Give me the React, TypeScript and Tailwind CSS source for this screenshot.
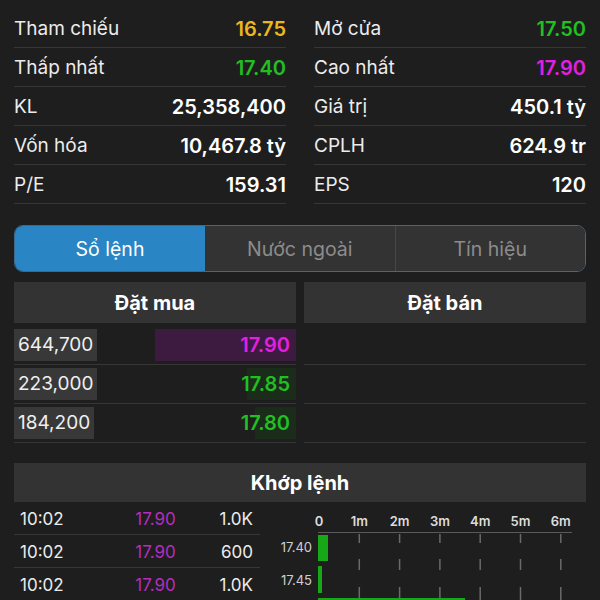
import React from "react";

const stats = [
  [
    { label: "Tham chiếu", value: "16.75", color: "text-[#eab71d]" },
    { label: "Thấp nhất", value: "17.40", color: "text-[#22bf22]" },
    { label: "KL", value: "25,358,400", color: "text-white" },
    { label: "Vốn hóa", value: "10,467.8 tỷ", color: "text-white" },
    { label: "P/E", value: "159.31", color: "text-white" },
  ],
  [
    { label: "Mở cửa", value: "17.50", color: "text-[#22bf22]" },
    { label: "Cao nhất", value: "17.90", color: "text-[#e21fe2]" },
    { label: "Giá trị", value: "450.1 tỷ", color: "text-white" },
    { label: "CPLH", value: "624.9 tr", color: "text-white" },
    { label: "EPS", value: "120", color: "text-white" },
  ],
];

const bids = [
  { vol: "644,700", price: "17.90", bar: 141, purple: true },
  { vol: "223,000", price: "17.85", bar: 49, purple: false },
  { vol: "184,200", price: "17.80", bar: 41, purple: false },
];

const trades = [
  { time: "10:02", price: "17.90", vol: "1.0K" },
  { time: "10:02", price: "17.90", vol: "600" },
  { time: "10:02", price: "17.90", vol: "1.0K" },
];

function Chart() {
  const xs = [0, 1, 2, 3, 4, 5, 6].map((i) => 59 + i * 40.3);
  const labels = ["0", "1m", "2m", "3m", "4m", "5m", "6m"];
  return (
    <svg width="326" height="98" viewBox="0 0 326 98" className="block">
      {labels.map((l, i) => (
        <text
          key={l}
          x={xs[i]}
          y="24"
          textAnchor="middle"
          fontSize="13"
          fontWeight="600"
          fill="#dcdcdc"
        >
          {l}
        </text>
      ))}
      <line x1="58" y1="30.5" x2="312" y2="30.5" stroke="#5a5a5a" strokeWidth="1" />
      {xs.slice(1).map((x) => (
        <g key={x} stroke="#6a6a6a" strokeWidth="1.5">
          <line x1={x} y1="32" x2={x} y2="41" />
          <line x1={x} y1="57" x2={x} y2="68" />
          <line x1={x} y1="85" x2={x} y2="98" />
        </g>
      ))}
      <text x="52" y="50" textAnchor="end" fontSize="13" fill="#cfcfcf">
        17.40
      </text>
      <text x="52" y="83" textAnchor="end" fontSize="13" fill="#cfcfcf">
        17.45
      </text>
      <rect x="58" y="33" width="10" height="26" fill="#16a816" />
      <rect x="58" y="64" width="4" height="27" fill="#16a816" />
      <rect x="58" y="96" width="147" height="4" fill="#16a816" />
    </svg>
  );
}

export default function App() {
  return (
    <div
      className="w-[600px] h-[600px] overflow-hidden bg-[#1e1e1e] px-[14px] pt-[9px] text-white"
      style={{ fontFamily: "Inter, 'Noto Sans', sans-serif" }}
    >
      <div className="grid grid-cols-2 gap-x-[28px]">
        {stats.map((col, ci) => (
          <div key={ci}>
            {col.map((s) => (
              <div
                key={s.label}
                className="h-[39px] flex items-center justify-between border-b border-[#363636] pt-[2px]"
              >
                <span className="text-[19px] text-[#ececec]">{s.label}</span>
                <span className={`text-[20px] font-semibold ${s.color}`}>{s.value}</span>
              </div>
            ))}
          </div>
        ))}
      </div>

      <div className="mt-[21px] h-[47px] flex rounded-[9px] border border-[#3b6a8c] overflow-hidden text-[19.5px]">
        <div className="w-[190px] bg-[#2a85c4] flex items-center justify-center text-white pt-[2px]">
          Sổ lệnh
        </div>
        <div className="flex-1 bg-[#333333] flex items-center justify-center text-[#8c8c8c] pt-[2px]">
          Nước ngoài
        </div>
        <div className="flex-1 bg-[#333333] border-l border-[#474747] flex items-center justify-center text-[#8c8c8c] pt-[2px]">
          Tín hiệu
        </div>
      </div>

      <div className="mt-[10px] grid grid-cols-2 gap-x-[8px]">
        <div>
          <div className="h-[41px] bg-[#333333] flex items-center justify-center text-[20px] font-bold">
            Đặt mua
          </div>
          <div className="mt-[3px]">
            {bids.map((b) => (
              <div
                key={b.vol}
                className="h-[39px] flex items-center justify-between border-b border-[#363636] pb-[1px]"
              >
                <span className="h-[32px] bg-[#383838] px-[4px] flex items-center text-[19px] text-[#efefef] pt-[1px]">
                  {b.vol}
                </span>
                <span
                  className={`h-[32px] flex items-center justify-end pr-[6px] pt-[1px] text-[20px] font-semibold ${
                    b.purple
                      ? "bg-[#3d1b40] text-[#e21fe2]"
                      : "bg-[#1b2c1b] text-[#22bf22]"
                  }`}
                  style={{ width: b.bar }}
                >
                  {b.price}
                </span>
              </div>
            ))}
          </div>
        </div>
        <div>
          <div className="h-[41px] bg-[#333333] flex items-center justify-center text-[20px] font-bold">
            Đặt bán
          </div>
          <div className="mt-[3px]">
            {bids.map((b) => (
              <div key={b.vol} className="h-[39px] border-b border-[#363636]" />
            ))}
          </div>
        </div>
      </div>

      <div className="mt-[20px] h-[39px] bg-[#333333] flex items-center justify-center text-[20px] font-bold pt-[1px]">
        Khớp lệnh
      </div>

      <div className="flex">
        <div className="w-[246px]">
          {trades.map((t, i) => (
            <div
              key={i}
              className="h-[33px] flex items-center border-b border-[#363636] text-[17px] pl-[6px] pr-[7px] pt-[3px]"
            >
              <span className="w-[90px] text-[#ececec]">{t.time}</span>
              <span className="flex-1 text-center text-[#b52cc0] pl-[8px]">{t.price}</span>
              <span className="w-[60px] text-right text-[#ececec]">{t.vol}</span>
            </div>
          ))}
        </div>
        <Chart />
      </div>
    </div>
  );
}
